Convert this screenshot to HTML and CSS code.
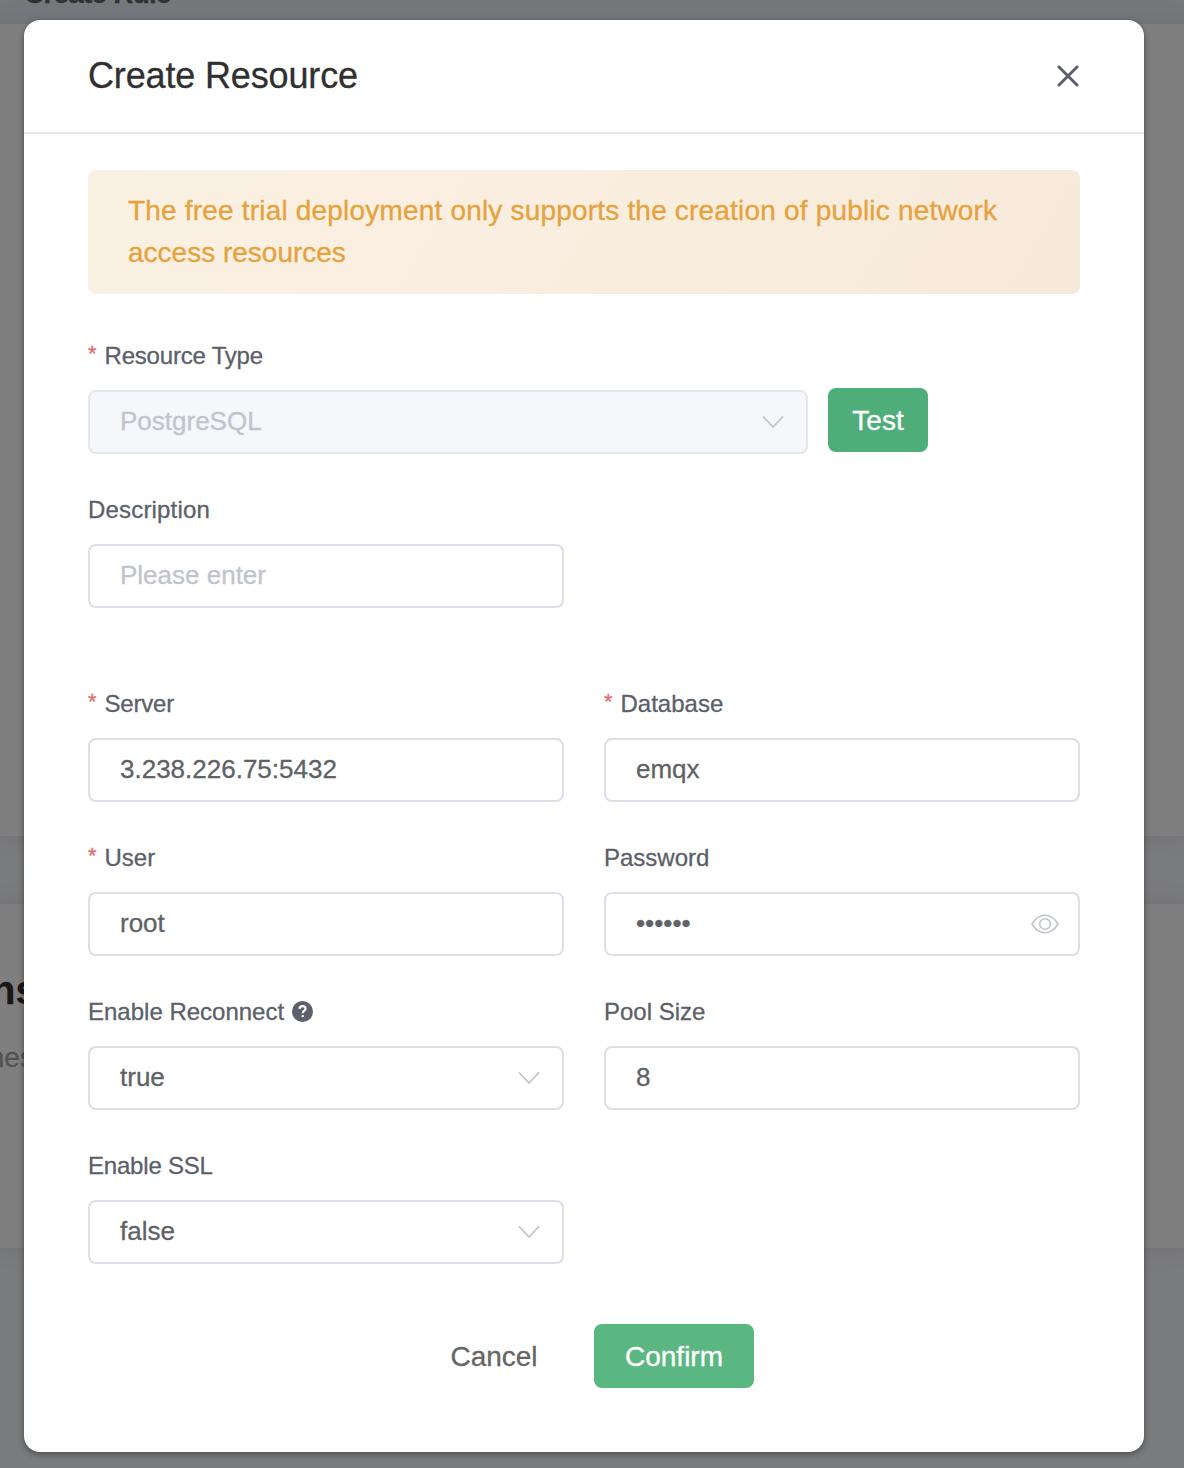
FILE: index.html
```html
<!DOCTYPE html>
<html lang="en">
<head>
<meta charset="utf-8">
<title>Create Resource</title>
<link rel="stylesheet" href="styles.css">
</head>
<body>
<div class="page">
  <div class="topbar"><span class="topbar-title">Create Rule</span></div>
  <div class="panel panel-rule"></div>
  <div class="panel panel-actions">
    <h2 class="panel-title">ns</h2>
    <p class="panel-text">mes</p>
  </div>
</div>

<div class="overlay">
  <section class="dialog">
    <header class="dialog-header">
      <h1 class="dialog-title">Create Resource</h1>
      <svg class="close" viewBox="0 0 22 22"><path d="M2 2L20 20M20 2L2 20"/></svg>
    </header>
    <div class="dialog-body">
      <div class="alert"><span class="alert-lead">The free trial deployment only supports the creation of public network</span> access resources</div>

      <div class="field">
        <div class="label"><span class="star">*</span><span class="tight">Resource Type</span></div>
        <div class="type-row">
          <div class="input disabled"><span>PostgreSQL</span><svg class="chevron" viewBox="0 0 22 14"><path d="M1.500 2L11 12L20.500 2"/></svg></div>
          <button class="btn btn-test">Test</button>
        </div>
      </div>

      <div class="grid first">
        <div class="field">
          <div class="label"><span class="loose">Description</span></div>
          <div class="input placeholder"><span>Please enter</span></div>
        </div>
      </div>

      <div class="grid">
        <div class="field">
          <div class="label"><span class="star">*</span><span class="tight">Server</span></div>
          <div class="input"><span>3.238.226.75:5432</span></div>
        </div>
        <div class="field">
          <div class="label"><span class="star">*</span><span>Database</span></div>
          <div class="input"><span>emqx</span></div>
        </div>
        <div class="field">
          <div class="label"><span class="star">*</span><span>User</span></div>
          <div class="input"><span>root</span></div>
        </div>
        <div class="field">
          <div class="label"><span>Password</span></div>
          <div class="input"><span>••••••</span><svg class="eye" viewBox="0 0 28 20"><path d="M1 10C4.500 4.200 9 1.200 14 1.200S23.500 4.200 27 10C23.500 15.800 19 18.800 14 18.800S4.500 15.800 1 10Z"/><circle cx="14" cy="10" r="5.300"/></svg></div>
        </div>
        <div class="field">
          <div class="label"><span>Enable Reconnect</span><svg class="help" viewBox="0 0 21 21"><circle cx="10.500" cy="10.500" r="10.500"/><path d="M7.500 7.900C7.600 6.100 8.800 5.200 10.500 5.200C12.300 5.200 13.500 6.200 13.500 7.700C13.500 9.700 10.700 9.800 10.700 12.300M10.700 14V16.100"/></svg></div>
          <div class="input"><span>true</span><svg class="chevron" viewBox="0 0 22 14"><path d="M1.500 2L11 12L20.500 2"/></svg></div>
        </div>
        <div class="field">
          <div class="label"><span>Pool Size</span></div>
          <div class="input"><span>8</span></div>
        </div>
        <div class="field">
          <div class="label"><span class="tight">Enable SSL</span></div>
          <div class="input"><span>false</span><svg class="chevron" viewBox="0 0 22 14"><path d="M1.500 2L11 12L20.500 2"/></svg></div>
        </div>
      </div>

      <footer class="actions">
        <button class="btn btn-cancel">Cancel</button>
        <button class="btn btn-confirm">Confirm</button>
      </footer>
    </div>
  </section>
</div>
</body>
</html>
```

FILE: styles.css
```css
* { box-sizing: border-box; }

body {
  margin: 0;
  width: 1184px;
  height: 1468px;
  overflow: hidden;
  position: relative;
  font-family: "Liberation Sans", Arial, sans-serif;
  background: #f5f6f9;
  -webkit-text-stroke-width: 0.3px;
}

/* Page behind the dialog */
.page { height: 1468px; overflow: hidden; }
.topbar {
  height: 24px;
  background: #eaf2f8;
  display: flex;
  align-items: flex-end;
  padding: 0 24px 14px;
}
.topbar-title { font-size: 28px; line-height: 32px; font-weight: 700; letter-spacing: -0.8px; color: #606060; }
.panel { background: #fff; box-shadow: 0 0 24px rgba(40, 40, 80, 0.1); }
.panel-rule { height: 812px; }
.panel-actions { height: 344px; margin-top: 68px; padding-top: 62px; }
.panel-title, .panel-text { margin: 0; white-space: nowrap; }
.panel-title { margin-left: -9px; font-size: 40px; line-height: 48px; color: #303030; }
.panel-text { margin: 24px 0 0 -19px; font-size: 28px; line-height: 40px; color: #a5a5a5; }

/* Dialog */
.overlay {
  position: absolute;
  inset: 0;
  padding: 20px 40px 16px 24px;
  background: rgba(0, 0, 0, 0.5);
}
.dialog {
  height: 1432px;
  background: #fff;
  border-radius: 16px;
  box-shadow: 0 2px 6px rgba(0, 0, 0, 0.4);
}
.dialog-header {
  height: 114px;
  border-bottom: 2px solid #e4e7ed;
  padding: 0 65px 0 64px;
  display: flex;
  align-items: center;
  justify-content: space-between;
}
.dialog-title {
  margin: 0;
  font-size: 36px;
  line-height: 44px;
  font-weight: 400;
  letter-spacing: -0.15px;
  color: #303030;
}
.close { width: 22px; height: 22px; fill: none; stroke: #5b606a; stroke-width: 3; stroke-linecap: round; }
.dialog-body { padding: 36px 64px 64px; }

.alert {
  height: 124px;
  padding: 20px 40px;
  border-radius: 8px;
  font-size: 28px;
  line-height: 42px;
  color: #e6a23c;
  background: linear-gradient(120deg, #fbf1e3, #f7eada);
  margin-bottom: 44px;
}
.alert-lead { letter-spacing: 0.19px; }

.label {
  height: 36px;
  margin-bottom: 16px;
  display: flex;
  align-items: center;
  font-size: 24px;
  line-height: 36px;
  color: #5b606a;
  white-space: nowrap;
}
.tight { letter-spacing: -0.2px; }
.loose { letter-spacing: 0.18px; }
.star { width: 16.500px; padding-bottom: 4px; color: #e36b68; font-size: 22px; }
.help { width: 21px; height: 21px; margin: 0 0 2px 8px; fill: #5b606a; }
.help path { fill: none; stroke: #fff; stroke-width: 2.200; }

.input {
  height: 64px;
  border: 2px solid #dcdfe6;
  border-radius: 8px;
  padding: 0 18px 2px 30px;
  display: flex;
  align-items: center;
  justify-content: space-between;
  font-size: 26px;
  color: #606266;
  white-space: nowrap;
}
.placeholder { color: #c0c4cc; }
.disabled { width: 720px; background: #f5f7fa; border-color: #e4e7ed; color: #c0c4cc; }
.chevron { width: 22px; height: 14px; margin: 1px 4px 0 0; fill: none; stroke: #c0c4cc; stroke-width: 1.800; stroke-linecap: round; }
.eye { width: 28px; height: 20px; margin: 1px 1px 0 0; fill: none; stroke: #c0c4cc; stroke-width: 1.600; }

.type-row { display: flex; gap: 20px; }
.grid {
  display: grid;
  grid-template-columns: 476px 476px;
  gap: 38px 40px;
}
.first { margin: 38px 0 78px; }

.btn {
  height: 64px;
  border: 0;
  border-radius: 8px;
  padding: 2px 0 0;
  font-family: inherit;
  font-size: 28px;
  color: #fff;
  -webkit-text-stroke-width: 0.3px;
}
.btn-test { width: 100px; margin-top: -2px; margin-bottom: 2px; background: #4fad79; }
.actions { display: flex; margin: 60px 0 0 342px; }
.btn-cancel { width: 128px; margin-right: 36px; background: transparent; color: #666; }
.btn-confirm { width: 160px; background: #5bb782; }
```
